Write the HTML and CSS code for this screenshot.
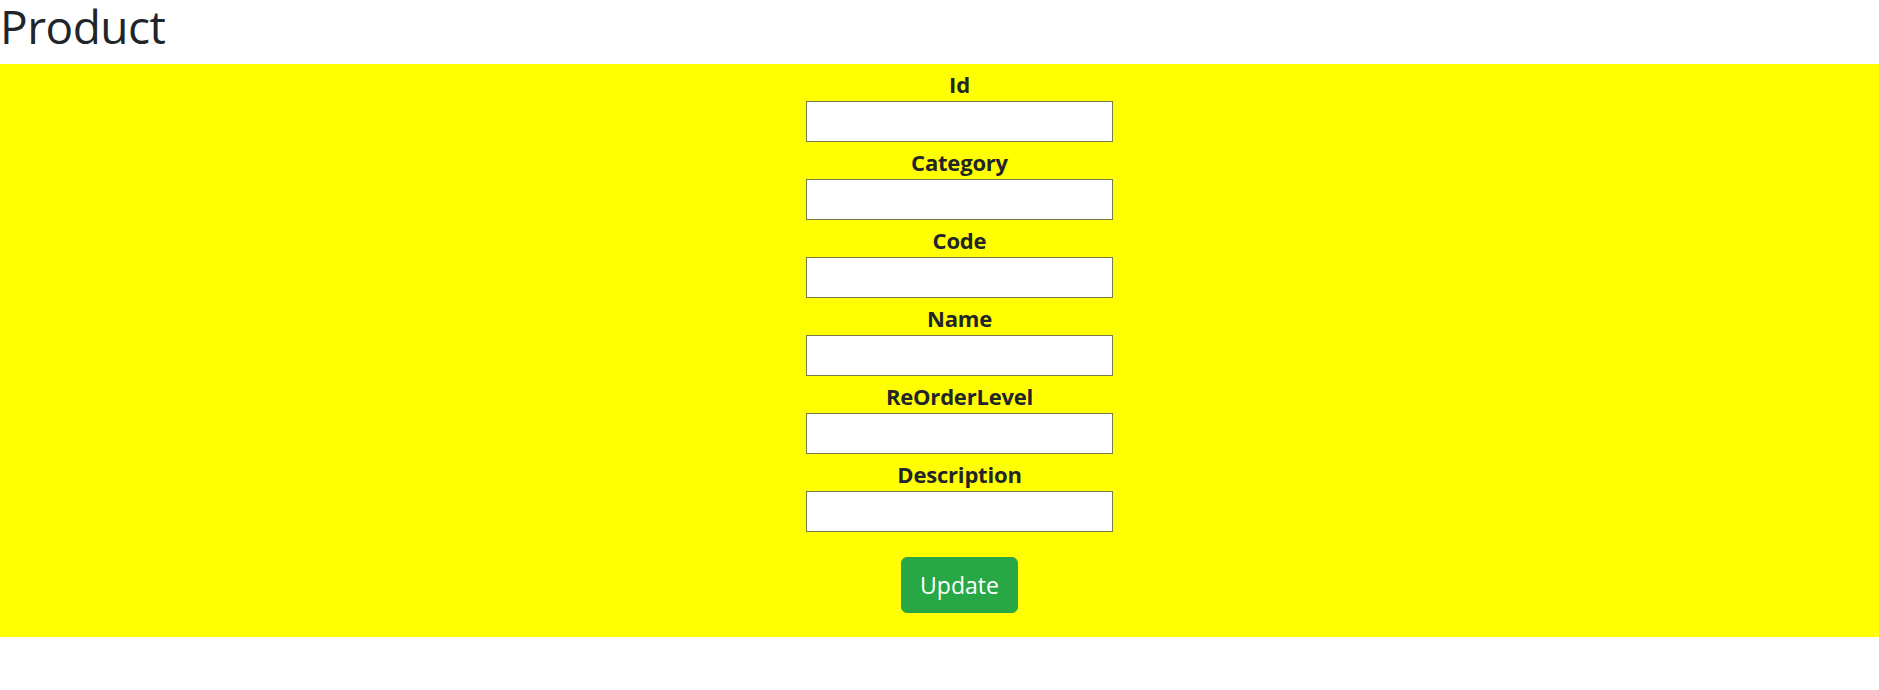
FILE: index.html
```html
<!DOCTYPE html>
<html lang="en">
<head>
<meta charset="utf-8">
<title>Product</title>
<link rel="stylesheet" href="styles.css">
</head>
<body>
<h1 class="title">Product</h1>
<section class="panel">
  <form class="form">
    <div class="field"><label class="label">Id</label><input class="input" type="text"></div>
    <div class="field"><label class="label">Category</label><input class="input" type="text"></div>
    <div class="field"><label class="label">Code</label><input class="input" type="text"></div>
    <div class="field"><label class="label">Name</label><input class="input" type="text"></div>
    <div class="field"><label class="label">ReOrderLevel</label><input class="input" type="text"></div>
    <div class="field"><label class="label">Description</label><input class="input" type="text"></div>
    <button class="btn" type="button">Update</button>
  </form>
</section>
</body>
</html>
```
FILE: styles.css
```css
* { box-sizing: border-box; }
body {
  margin: 0;
  font-family: "Open Sans", "Noto Sans", sans-serif;
  color: #212529;
  background: #fff;
}
.title {
  margin: 0;
  height: 64px;
  font-size: 46px;
  font-weight: 400;
  line-height: 52px;
  letter-spacing: -0.5px;
}
.panel {
  background: #ffff00;
  padding: 8px 0 24px 40px;
}
.form {
  display: flex;
  flex-direction: column;
  align-items: center;
}
.field {
  display: flex;
  flex-direction: column;
  align-items: center;
  margin-bottom: 8px;
}
.label {
  font-weight: 700;
  font-size: 22px;
  line-height: 24px;
  height: 29px;
  letter-spacing: -0.2px;
}
.input {
  width: 307px;
  height: 41px;
  border: 1px solid #7a7a4a;
  background: #fff;
  margin: 0;
  padding: 0 8px;
  font-size: 18px;
}
.btn {
  margin-top: 17px;
  width: 117px;
  height: 56px;
  background: #28a745;
  border: 1px solid #28a745;
  border-radius: 6px;
  color: #fff;
  font-family: "Open Sans", "Noto Sans", sans-serif;
  font-size: 23px;
  padding: 0;
  line-height: 54px;
}
```
